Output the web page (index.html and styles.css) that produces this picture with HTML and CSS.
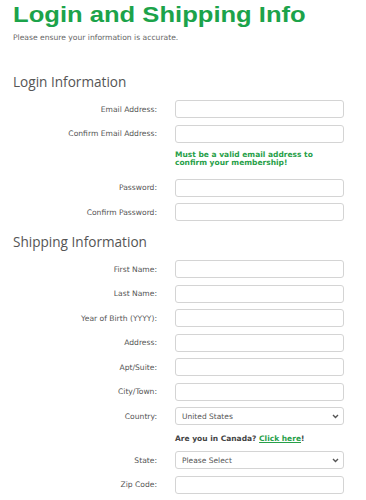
FILE: index.html
```html
<!DOCTYPE html>
<html>
<head>
<meta charset="utf-8">
<link rel="stylesheet" href="styles.css">
</head>
<body>
<div class="page">
  <h1 class="title">Login and Shipping Info</h1>
  <p class="subtitle">Please ensure your information is accurate.</p>

  <h2 class="section">Login Information</h2>
  <div class="form">
    <label class="lbl">Email Address:</label><div class="field"><input class="inp" type="text"></div>
    <label class="lbl">Confirm Email Address:</label><div class="field"><input class="inp" type="text"></div>
    <div></div><div class="note">Must be a valid email address to<br>confirm your membership!</div>
    <label class="lbl">Password:</label><div class="field"><input class="inp" type="password"></div>
    <label class="lbl">Confirm Password:</label><div class="field"><input class="inp" type="password"></div>
  </div>

  <h2 class="section section2">Shipping Information</h2>
  <div class="form">
    <label class="lbl">First Name:</label><div class="field"><input class="inp" type="text"></div>
    <label class="lbl">Last Name:</label><div class="field"><input class="inp" type="text"></div>
    <label class="lbl">Year of Birth (YYYY):</label><div class="field"><input class="inp" type="text"></div>
    <label class="lbl">Address:</label><div class="field"><input class="inp" type="text"></div>
    <label class="lbl">Apt/Suite:</label><div class="field"><input class="inp" type="text"></div>
    <label class="lbl">City/Town:</label><div class="field"><input class="inp" type="text"></div>
    <label class="lbl">Country:</label><div class="field"><div class="sel"><span>United States</span><svg class="chev" width="7" height="5" viewBox="0 0 7 5"><path d="M1 1 L3.5 3.5 L6 1" fill="none" stroke="#555" stroke-width="1.4"/></svg></div></div>
    <div></div><div class="canada">Are you in Canada? <a class="link" href="#">Click here</a>!</div>
    <label class="lbl">State:</label><div class="field"><div class="sel"><span>Please Select</span><svg class="chev" width="7" height="5" viewBox="0 0 7 5"><path d="M1 1 L3.5 3.5 L6 1" fill="none" stroke="#555" stroke-width="1.4"/></svg></div></div>
    <label class="lbl">Zip Code:</label><div class="field"><input class="inp" type="text"></div>
  </div>
</div>
</body>
</html>
```
FILE: styles.css
```css
* { box-sizing: border-box; }
html, body { margin: 0; padding: 0; background: #fff; }
.page { padding: 0 0 0 13px; width: 366px; }
.title {
  margin: 0;
  padding-top: 3px;
  width: max-content;
  font-family: "Liberation Sans", Arial, sans-serif;
  font-weight: bold;
  font-size: 21.5px;
  line-height: 24px;
  color: #1ca34a;
  transform: scaleX(1.19);
  transform-origin: left center;
  white-space: nowrap;
}
.subtitle {
  margin: 6px 0 0 0;
  font-family: "DejaVu Sans", Verdana, sans-serif;
  font-size: 7.6px;
  line-height: 9px;
  color: #666;
}
.section {
  margin: 31px 0 0 0;
  font-family: "Open Sans", sans-serif;
  font-weight: normal;
  font-size: 13.6px;
  line-height: 18px;
  color: #555;
}
.section2 { margin-top: 12px; }
.form {
  display: grid;
  grid-template-columns: 144px 169px;
  column-gap: 18px;
  row-gap: 6.5px;
  margin-top: 9px;
}
.lbl {
  font-family: "DejaVu Sans", Verdana, sans-serif;
  font-size: 7.6px;
  color: #555;
  text-align: right;
  align-self: center;
}
.field { height: 18px; }
.inp {
  display: block;
  width: 169px;
  height: 18px;
  margin: 0;
  border: 1px solid #d4d4d4;
  border-radius: 3px;
  background: #fff;
  padding: 0 6px;
}
.note {
  font-family: "DejaVu Sans", Verdana, sans-serif;
  font-weight: bold;
  font-size: 7.5px;
  line-height: 8px;
  color: #27a048;
  padding: 2px 0 5px;
}
.sel {
  display: flex;
  align-items: center;
  justify-content: space-between;
  width: 169px;
  height: 18px;
  border: 1px solid #d4d4d4;
  border-radius: 3px;
  padding: 0 4px 0 6px;
  font-family: "DejaVu Sans", Verdana, sans-serif;
  font-size: 7.5px;
  color: #555;
}
.canada {
  font-family: "DejaVu Sans", Verdana, sans-serif;
  font-weight: bold;
  font-size: 7.5px;
  line-height: 10px;
  color: #444;
  padding: 2px 0 1px;
}
.link { color: #27a048; text-decoration: underline; }
```
